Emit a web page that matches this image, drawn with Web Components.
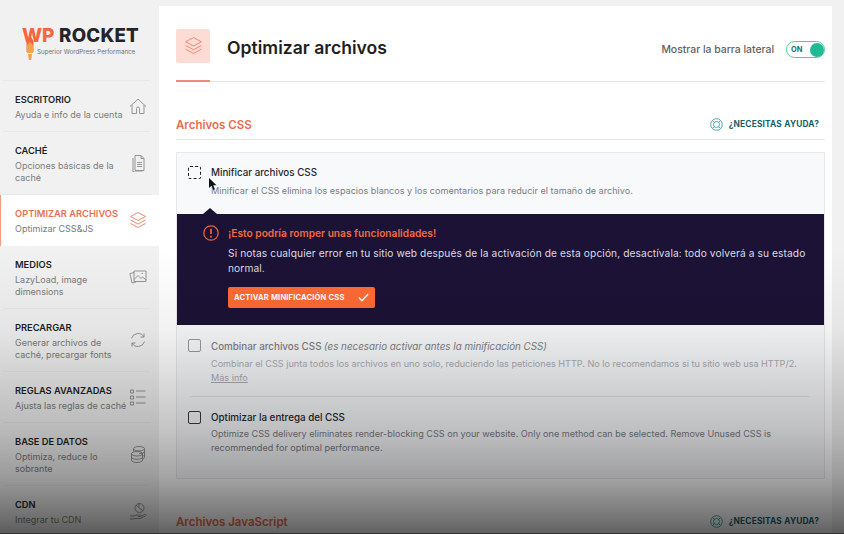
<!DOCTYPE html>
<html lang="es">
<head>
<meta charset="utf-8">
<title>WP Rocket</title>
<style>
    html, body { margin: 0; height: 534px; overflow: hidden; }
    body { background: #f1f1f1; font-family: Inter, "Liberation Sans", sans-serif; color: #24242a; }
</style>
</head>
<body>
<wpr-app>
    <wpr-sidebar slot="sidebar">
        <wpr-nav-item label="Escritorio" icon="home">Ayuda e info de la cuenta</wpr-nav-item>
        <wpr-nav-item label="Caché" icon="doc">Opciones básicas de la<br>caché</wpr-nav-item>
        <wpr-nav-item label="Optimizar archivos" icon="layers" active>Optimizar CSS&amp;JS</wpr-nav-item>
        <wpr-nav-item label="Medios" icon="photo">LazyLoad, image<br>dimensions</wpr-nav-item>
        <wpr-nav-item label="Precargar" icon="refresh">Generar archivos de<br>caché, precargar fonts</wpr-nav-item>
        <wpr-nav-item label="Reglas avanzadas" icon="list">Ajusta las reglas de caché</wpr-nav-item>
        <wpr-nav-item label="Base de datos" icon="db">Optimiza, reduce lo<br>sobrante</wpr-nav-item>
        <wpr-nav-item label="CDN" icon="cdn">Integrar tu CDN</wpr-nav-item>
    </wpr-sidebar>
    <wpr-main slot="main">
        <wpr-header title="Optimizar archivos"></wpr-header>
        <wpr-section title="Archivos CSS">
            <wpr-card>
                <wpr-option title="Minificar archivos CSS" dashed plain>
                    Minificar el CSS elimina los espacios blancos y los comentarios para reducir el tamaño de archivo.
                </wpr-option>
                <wpr-warning title="¡Esto podría romper unas funcionalidades!" action="Activar minificación CSS">
                    Si notas cualquier error en tu sitio web después de la activación de esta opción, desactívala: todo volverá a su estado normal.
                </wpr-warning>
                <wpr-option title="Combinar archivos CSS" note="(es necesario activar antes la minificación CSS)" disabled divider>
                    Combinar el CSS junta todos los archivos en uno solo, reduciendo las peticiones HTTP. No lo recomendamos si tu sitio web usa HTTP/2.<br><u>Más info</u>
                </wpr-option>
                <wpr-option title="Optimizar la entrega del CSS" last>
                    Optimize CSS delivery eliminates render-blocking CSS on your website. Only one method can be selected. Remove Unused CSS is recommended for optimal performance.
                </wpr-option>
            </wpr-card>
        </wpr-section>
        <wpr-section title="Archivos JavaScript"></wpr-section>
    </wpr-main>
</wpr-app>

<script>
const ICONS = {
    home: '<path d="M1 9.500 9 2l8 7.500M3 8v8.500h4.500v-5a1.500 1.500 0 0 1 3 0v5H15V8"/>',
    doc: '<path d="M6 1.500h6l3 3v12H6zM12 1.500v3h3M4 4v14h9.500M8 8.500h5M8 10.500h5M8 12.500h5"/>',
    layers: '<path d="M9 1.500 1.500 5.500l7.500 4 7.500-4zM1.500 9l7.500 4 7.500-4M1.500 12.500l7.500 4 7.500-4"/>',
    photo: '<path d="M5 4.500 1 5.500l2 9.500 4-1M5 3h12v10.500H5zM5 11.500 9 7.500l3 3 1.500-1.500 3.500 3M12.500 5.500h1.500"/>',
    refresh: '<path d="M2.500 7.500A6.800 6.800 0 0 1 15 6M15 2.500V6h-3.500M15.500 10.500A6.800 6.800 0 0 1 3 12M3 15.500V12h3.500"/>',
    list: '<path d="M1.500 2h3v3h-3zM1.500 8h3v3h-3zM1.500 14h3v3h-3zM7 3h9.500M7 9h9.500M7 15h9.500"/>',
    db: '<path d="M10 1.500c3 0 5.500.900 5.500 2.200S13 5.900 10 5.900 4.500 5 4.500 3.700 7 1.500 10 1.500zM15.500 3.700v8.500c0 1-1 1.700-2.500 2M4.500 3.700v3M15.500 6.500c0 1.200-2.500 2.200-5.500 2.200M15.500 9.500c0 1-1 1.700-2.500 2M8 6.500c-3 0-5.500 1-5.500 2.200v6.500C2.500 16.500 5 17.500 8 17.500s5.500-1 5.500-2.300V8.700C13.500 7.500 11 6.500 8 6.500zM2.500 8.700c0 1.300 2.500 2.300 5.500 2.300s5.500-1 5.500-2.300M2.500 12c0 1.300 2.500 2.300 5.500 2.300s5.500-1 5.500-2.300"/>',
    cdn: '<circle cx="10.500" cy="6" r="4.500"/><path d="M7.500 3.500 13.500 8.500M10 1.500v3M1 14h4l2-1h4.500c1 0 1 1.500 0 1.500H9m3-.5 4-1.500c1-.300 1.500 1 .500 1.500L11 16.500H5l-1 .500H1"/>'
};

class WprApp extends HTMLElement {
    constructor() {
        super();
        this.attachShadow({ mode: 'open' });
        this.shadowRoot.innerHTML = `
            <style>
                :host { display: grid; grid-template-columns: 159px 673px; height: 534px; position: relative; overflow: hidden; }
                .shade {
                    position: absolute; top: 0; left: 0; width: 844px; height: 534px; pointer-events: none;
                    background: linear-gradient(to bottom, rgba(0,0,0,0) 250px, rgba(0,0,0,.05) 330px, rgba(0,0,0,.23) 430px, rgba(0,0,0,.36) 478px, rgba(0,0,0,.55) 520px, rgba(0,0,0,.62) 533px, #333 533px);
                }
                .cursor { position: absolute; left: 209px; top: 178px; width: 8px; height: 12px; }
            </style>
            <slot name="sidebar"></slot>
            <slot name="main"></slot>
            <svg class="cursor" viewBox="0 0 8 12"><path d="M0 0v10l2.500-2.200L4.500 12 6 11.200 4.200 7.300H7.500z" fill="#111"/></svg>
            <div class="shade"></div>`;
    }
}

class WprSidebar extends HTMLElement {
    constructor() {
        super();
        this.attachShadow({ mode: 'open' });
        this.shadowRoot.innerHTML = `
            <style>
                :host { display: block; }
                .logo { height: 81px; box-sizing: border-box; padding: 26px 0 0 22px; display: flex; gap: 5px; position: relative; }
                .wp { font: 800 19px/20px Inter, sans-serif; color: #f56640; letter-spacing: -.2px; }
                .name { font: 800 18.700px/20px Inter, sans-serif; color: #24242a; letter-spacing: .2px; }
                .tag { position: absolute; left: 37px; top: 48px; font: 400 6.200px/8px Inter, sans-serif; color: #707070; white-space: nowrap; }
                svg { position: absolute; left: 26px; top: 35px; }
                .sep { position: absolute; left: 3px; right: 9px; bottom: 0; border-bottom: 1px solid #e8e8e8; }
            </style>
            <div class="logo">
                <span class="wp">WP</span><span class="name">ROCKET</span>
                <span class="tag">Superior WordPress Performance</span>
                <svg width="8" height="25" viewBox="0 0 8 25"><path d="M4 0 7.500 6v11h-7V6z" fill="#f56640"/><path d="M1 10 4 7l3 3v8H1zM2 19h4l-.800 6H2.800z" fill="#f9a04a"/></svg>
                <div class="sep"></div>
            </div>
            <slot></slot>`;
    }
}

class WprNavItem extends HTMLElement {
    constructor() {
        super();
        this.attachShadow({ mode: 'open' });
    }

    connectedCallback() {
        const active = this.hasAttribute('active');
        this.shadowRoot.innerHTML = `
            <style>
                :host { display: block; }
                .item {
                    position: relative; box-sizing: border-box; min-height: 51px; padding: 12px 12px 11px 15px;
                    display: flex; align-items: flex-start; justify-content: space-between;
                }
                .item::after { content: ""; position: absolute; left: 3px; right: 9px; bottom: 0; border-bottom: 1px solid #e8e8e8; }
                :host([active]) .item { background: #fff; border-left: 1px solid #f59a85; padding-left: 14px; }
                :host([active]) .item::after { display: none; }
                .label { font: 600 9.300px/13px Inter, sans-serif; text-transform: uppercase; color: ${active ? '#e96f52' : '#1f1f24'}; margin-bottom: 3px; white-space: nowrap; }
                .sub { font: 400 9px/12px Inter, sans-serif; color: #7b7b7b; white-space: nowrap; }
                svg { position: absolute; right: 12px; top: 50%; margin-top: -10px; width: 18px; height: 18px; fill: none; stroke: ${active ? '#ef7d62' : '#8a8a8a'}; stroke-width: .9; }
            </style>
            <div class="item">
                <div>
                    <div class="label">${this.getAttribute('label')}</div>
                    <div class="sub"><slot></slot></div>
                </div>
                <svg viewBox="0 0 18 18">${ICONS[this.getAttribute('icon')]}</svg>
            </div>`;
    }
}

class WprMain extends HTMLElement {
    constructor() {
        super();
        this.attachShadow({ mode: 'open' });
        this.shadowRoot.innerHTML = `
            <style>
                :host { display: block; margin-top: 6px; background: #fff; padding: 0 7px 0 17px; height: 528px; box-sizing: border-box; overflow: hidden; }
            </style>
            <slot></slot>`;
    }
}

class WprHeader extends HTMLElement {
    constructor() {
        super();
        this.attachShadow({ mode: 'open' });
    }

    connectedCallback() {
        this.shadowRoot.innerHTML = `
            <style>
                :host { display: flex; align-items: center; height: 76px; box-sizing: border-box; padding-top: 12px; padding-bottom: 8px; border-bottom: 1px solid #e6e6e6; position: relative; }
                :host::after { content: ""; position: absolute; left: 0; bottom: -1px; width: 34px; height: 2px; background: #ef8a78; }
                .icon { width: 34px; height: 34px; background: #fddcd5; border-radius: 2px; display: flex; align-items: center; justify-content: center; }
                .icon svg { width: 19px; height: 19px; fill: none; stroke: #f2836c; stroke-width: .9; }
                h1 { margin: 4px 0 0 17px; font: 600 17.600px/24px Inter, sans-serif; color: #1e1e22; flex: 1; }
                .side { font: 500 10.400px/14px Inter, sans-serif; color: #5f5f5f; margin: 8px 12px 0 0; }
                wpr-toggle { margin-top: 8px; }
            </style>
            <div class="icon"><svg viewBox="0 0 18 18">${ICONS.layers}</svg></div>
            <h1>${this.getAttribute('title')}</h1>
            <span class="side">Mostrar la barra lateral</span>
            <wpr-toggle>ON</wpr-toggle>`;
    }
}

class WprToggle extends HTMLElement {
    constructor() {
        super();
        this.attachShadow({ mode: 'open' });
        this.shadowRoot.innerHTML = `
            <style>
                :host { display: flex; align-items: center; justify-content: space-between; box-sizing: border-box; width: 39px; height: 17px; border: 1px solid #5cc4ac; border-radius: 9px; padding: 0 .5px 0 4px; font: 700 7.500px/1 Inter, sans-serif; color: #14796b; }
                i { width: 14px; height: 14px; border-radius: 50%; background: #1fbb92; }
            </style>
            <slot></slot><i></i>`;
    }
}

class WprHelp extends HTMLElement {
    constructor() {
        super();
        this.attachShadow({ mode: 'open' });
        this.shadowRoot.innerHTML = `
            <style>
                :host { display: flex; align-items: center; gap: 6px; font: 700 8.300px/1 Inter, sans-serif; letter-spacing: .2px; color: #155e70; text-transform: uppercase; }
                svg { width: 13px; height: 13px; fill: none; stroke: #4ba9ad; stroke-width: 1; }
            </style>
            <svg viewBox="0 0 13 13"><circle cx="6.500" cy="6.500" r="5.800"/><circle cx="6.500" cy="6.500" r="3"/><path d="M2.400 2.400 4.400 4.400M10.600 2.400 8.600 4.400M2.400 10.600 4.400 8.600M10.600 10.600 8.600 8.600"/></svg>
            <span><slot></slot></span>`;
    }
}

class WprSection extends HTMLElement {
    constructor() {
        super();
        this.attachShadow({ mode: 'open' });
    }

    connectedCallback() {
        this.shadowRoot.innerHTML = `
            <style>
                :host { display: block; }
                .head { display: flex; align-items: center; justify-content: space-between; height: 19px; margin-top: 33px; padding: 0 6px 5px 0; border-bottom: 1px solid #e6e6e6; }
                h2 { margin: 0; font: 600 11.500px/14px Inter, sans-serif; color: #ea6b4d; }
            </style>
            <div class="head"><h2>${this.getAttribute('title')}</h2><wpr-help>¿Necesitas ayuda?</wpr-help></div>
            <slot></slot>`;
    }
}

class WprCard extends HTMLElement {
    constructor() {
        super();
        this.attachShadow({ mode: 'open' });
        this.shadowRoot.innerHTML = `
            <style>
                :host { display: block; margin: 12px 0 0 1px; background: #f8f9fb; border: 1px solid #e8e8ea; border-left-width: 0; box-shadow: -1px 0 0 #e8e8ea; }
            </style>
            <slot></slot>`;
    }
}

class WprOption extends HTMLElement {
    constructor() {
        super();
        this.attachShadow({ mode: 'open' });
    }

    connectedCallback() {
        const note = this.getAttribute('note');
        this.shadowRoot.innerHTML = `
            <style>
                :host { display: block; padding: 14px 14px 17px 11px; position: relative; }
                :host([plain]) { padding-top: 13px; padding-bottom: 16px; }
                :host([disabled]) { padding-bottom: 12px; }
                :host([last]) { padding-bottom: 23px; }
                :host([divider])::after { content: ""; position: absolute; left: 13px; right: 14px; bottom: 0; border-bottom: 1px solid #e4e4e6; }
                .row { display: grid; grid-template-columns: 13px 1fr; column-gap: 10px; }
                .box { width: 13px; height: 13px; box-sizing: border-box; border: 1.500px solid #3a3a42; border-radius: 2px; }
                :host([dashed]) .box { border: 1px dashed #222; }
                :host([disabled]) .box { border-color: #9a9a9e; }
                .title { font: 500 9.800px/13px Inter, sans-serif; color: #26262c; }
                :host([disabled]) .title { color: #808085; padding-top: 1px; }
                em { font-weight: 400; }
                .desc { grid-column: 2; margin-top: 3px; font: 400 9.100px/14px Inter, sans-serif; color: #7c7c84; }
                :host([plain]) .desc { margin-top: 5px; }
                :host([disabled]) .desc { color: #acacb2; margin-top: 4px; }
            </style>
            <div class="row">
                <div class="box"></div>
                <div class="title">${this.getAttribute('title')}${note ? ` <em>${note}</em>` : ''}</div>
                <div class="desc"><slot></slot></div>
            </div>`;
    }
}

class WprWarning extends HTMLElement {
    constructor() {
        super();
        this.attachShadow({ mode: 'open' });
    }

    connectedCallback() {
        this.shadowRoot.innerHTML = `
            <style>
                :host { display: block; position: relative; background: #1b1235; color: #dcdbe4; padding: 12px 15px 17px 51px; height: 111px; box-sizing: border-box; }
                :host::before { content: ""; position: absolute; left: 26px; top: -6px; border: 7px solid transparent; border-top: 0; border-bottom: 6px solid #1b1235; }
                .mark { position: absolute; left: 26px; top: 11px; width: 16px; height: 16px; fill: none; stroke: #e8603c; }
                h3 { margin: 0 0 6px; font: 600 10.200px/14px Inter, sans-serif; color: #ef6a42; }
                p { margin: 0; font: 400 10.200px/15px Inter, sans-serif; letter-spacing: .1px; }
                button {
                    display: flex; align-items: center; justify-content: space-between; width: 147px; height: 21px; margin-top: 11px; padding: 0 6px;
                    border: 0; border-radius: 2px; background: #ff6a35; color: #fff; font: 700 7.600px/1 Inter, sans-serif; letter-spacing: .15px; text-transform: uppercase;
                }
                button svg { width: 11px; height: 9px; fill: none; stroke: #fff; stroke-width: 1.400; }
            </style>
            <svg class="mark" viewBox="0 0 16 16"><circle cx="8" cy="8" r="7.200" stroke-width="1.300"/><path d="M8 3.800v5.200M8 10.800v1.600" stroke-width="1.800"/></svg>
            <h3>${this.getAttribute('title')}</h3>
            <p><slot></slot></p>
            <button>${this.getAttribute('action')}<svg viewBox="0 0 11 9"><path d="M.8 4.500 4 7.800 10.200 1"/></svg></button>`;
    }
}

customElements.define('wpr-app', WprApp);
customElements.define('wpr-sidebar', WprSidebar);
customElements.define('wpr-nav-item', WprNavItem);
customElements.define('wpr-main', WprMain);
customElements.define('wpr-header', WprHeader);
customElements.define('wpr-toggle', WprToggle);
customElements.define('wpr-help', WprHelp);
customElements.define('wpr-section', WprSection);
customElements.define('wpr-card', WprCard);
customElements.define('wpr-option', WprOption);
customElements.define('wpr-warning', WprWarning);
</script>
</body>
</html>
